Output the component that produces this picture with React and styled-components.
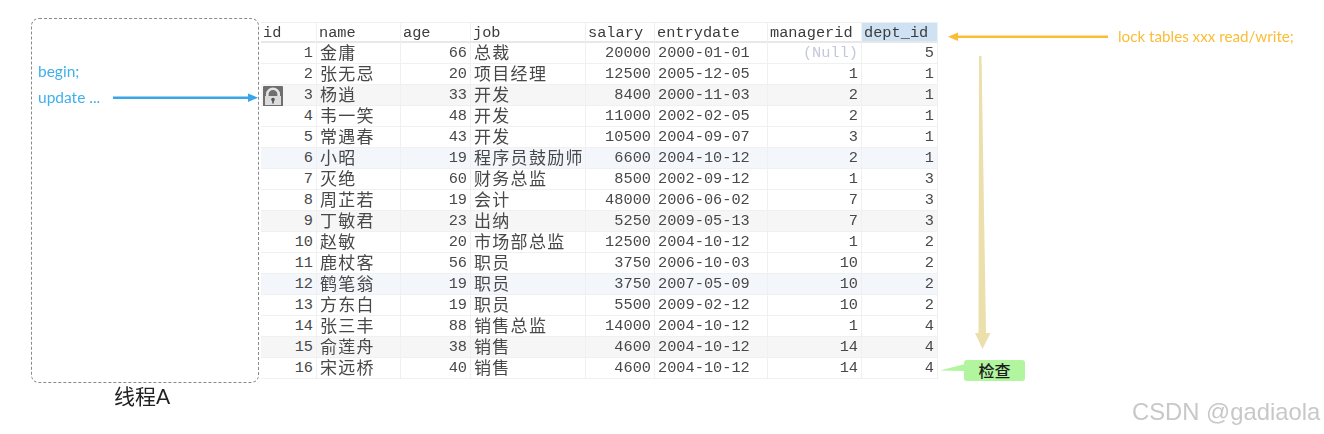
import React from 'react'
import styled, { createGlobalStyle } from 'styled-components'

const GlobalStyle = createGlobalStyle`
  html, body { margin: 0; padding: 0; background: #fff; }
  body { width: 1324px; height: 434px; overflow: hidden; font-family: Lato, "Noto Sans CJK SC", sans-serif; }
`

const columns = [
  { key: 'id', width: 56, align: 'right' },
  { key: 'name', width: 84, align: 'left' },
  { key: 'age', width: 70, align: 'right' },
  { key: 'job', width: 115, align: 'left' },
  { key: 'salary', width: 69, align: 'right' },
  { key: 'entrydate', width: 113, align: 'left' },
  { key: 'managerid', width: 94, align: 'right' },
  { key: 'dept_id', width: 76, align: 'right' },
]

const rows = [
  [1, '金庸', 66, '总裁', 20000, '2000-01-01', null, 5],
  [2, '张无忌', 20, '项目经理', 12500, '2005-12-05', 1, 1],
  [3, '杨逍', 33, '开发', 8400, '2000-11-03', 2, 1],
  [4, '韦一笑', 48, '开发', 11000, '2002-02-05', 2, 1],
  [5, '常遇春', 43, '开发', 10500, '2004-09-07', 3, 1],
  [6, '小昭', 19, '程序员鼓励师', 6600, '2004-10-12', 2, 1],
  [7, '灭绝', 60, '财务总监', 8500, '2002-09-12', 1, 3],
  [8, '周芷若', 19, '会计', 48000, '2006-06-02', 7, 3],
  [9, '丁敏君', 23, '出纳', 5250, '2009-05-13', 7, 3],
  [10, '赵敏', 20, '市场部总监', 12500, '2004-10-12', 1, 2],
  [11, '鹿杖客', 56, '职员', 3750, '2006-10-03', 10, 2],
  [12, '鹤笔翁', 19, '职员', 3750, '2007-05-09', 10, 2],
  [13, '方东白', 19, '职员', 5500, '2009-02-12', 10, 2],
  [14, '张三丰', 88, '销售总监', 14000, '2004-10-12', 1, 4],
  [15, '俞莲舟', 38, '销售', 4600, '2004-10-12', 14, 4],
  [16, '宋远桥', 40, '销售', 4600, '2004-10-12', 14, 4],
]

const tints = { 3: '#f6f6f6', 6: '#f3f7fc', 9: '#f6f6f6', 12: '#f3f7fc', 15: '#f6f6f6' }

const Page = styled.div`
  position: relative;
  width: 1324px;
  height: 434px;
  display: flex;
  align-items: flex-start;
  padding: 18px 0 0 31px;
  box-sizing: border-box;
  filter: blur(0.35px);
`

const ThreadColumn = styled.div`
  width: 228px;
  flex: none;
  display: flex;
  flex-direction: column;
  align-items: center;
`

const ThreadBox = styled.div`
  width: 228px;
  height: 365px;
  box-sizing: border-box;
  border: 1px dashed #8a8a8a;
  border-radius: 8px;
  padding: 43px 0 0 6px;
  display: flex;
  flex-direction: column;
  gap: 8px;
`

const BlueLabel = styled.div`
  font-size: 15.5px;
  line-height: 18px;
  color: #3fb0ec;
`

const ThreadCaption = styled.div`
  margin: -1px 6px 0 0;
  font-size: 21px;
  line-height: 28px;
  color: #222;
`

const Table = styled.div`
  margin: 4px 0 0 2px;
  flex: none;
  display: grid;
  grid-template-columns: ${columns.map(c => `${c.width}px`).join(' ')};
  grid-auto-rows: 21px;
  font-family: "Liberation Mono", "Noto Sans CJK SC", monospace;
  font-size: 15.3px;
  color: #484848;
`

const Cell = styled.div`
  position: relative;
  box-sizing: border-box;
  height: 21px;
  line-height: 20px;
  padding: 0 3px;
  white-space: nowrap;
  text-align: ${p => p.$align};
  background: ${p => p.$bg || '#fff'};
  border-right: 1px solid #f0f0f0;
  border-bottom: 1px solid #f0f0f0;
`

const HeadCell = styled(Cell)`
  padding: 0 2px;
  line-height: 22px;
  color: #3c3c3c;
  border-bottom: 2px solid #e8e8e8;
  box-shadow: inset 0 1px 0 #efefef;
  background: ${p => (p.$active ? '#cfe2f3' : '#fff')};
`

const CjkText = styled.span`
  display: inline-block;
  height: 17px;
  line-height: 17px;
  vertical-align: top;
  font-family: "Noto Sans CJK SC", sans-serif;
  font-size: 17px;
  letter-spacing: 1.3px;
`

const NullText = styled.span`
  color: #c3c9dc;
`

const LockBadge = styled.svg`
  position: absolute;
  left: 2px;
  top: 1px;
`

const Overlay = styled.svg`
  position: absolute;
  left: 0;
  top: 0;
  pointer-events: none;
`

const LockNote = styled.div`
  position: absolute;
  left: 1118px;
  top: 26px;
  font-size: 15.2px;
  line-height: 20px;
  color: #fbbd36;
`

const CheckTag = styled.div`
  position: absolute;
  left: 964px;
  top: 360px;
  width: 61px;
  height: 21px;
  border-radius: 3px;
  background: #b2f59f;
  color: #1c1c1c;
  font-size: 16px;
  font-weight: 500;
  line-height: 21px;
  text-align: center;
`

const Watermark = styled.div`
  position: absolute;
  left: 1132px;
  top: 399px;
  font-family: "Liberation Sans", sans-serif;
  font-size: 23.8px;
  line-height: 26px;
  color: #c8c8c8;
`

const Lock = () => (
  <LockBadge width="20" height="21" viewBox="0 0 20 21">
    <rect width="20" height="21" rx="1" fill="#6f6f6f" />
    <path d="M3 11V8a7 6.500 0 0 1 14 0v3h-2.600V8a4.400 4 0 0 0-8.800 0v3z" fill="#e4e4e4" />
    <rect x="2" y="10" width="16" height="9" fill="#dcdcdc" />
    <circle cx="10" cy="13.600" r="1.800" fill="#555" />
    <rect x="9.200" y="14" width="1.600" height="3.500" fill="#555" />
  </LockBadge>
)

const formatCell = (value, key) => {
  if (value === null) return <NullText>(Null)</NullText>
  if (key === 'name' || key === 'job') return <CjkText>{value}</CjkText>
  return value
}

export default function App() {
  return (
    <Page>
      <GlobalStyle />
      <ThreadColumn>
        <ThreadBox>
          <BlueLabel>begin;</BlueLabel>
          <BlueLabel>update ...</BlueLabel>
        </ThreadBox>
        <ThreadCaption>线程A</ThreadCaption>
      </ThreadColumn>

      <Table>
        {columns.map(c => (
          <HeadCell key={c.key} $align="left" $active={c.key === 'dept_id'}>{c.key}</HeadCell>
        ))}
        {rows.map(row => row.map((value, i) => (
          <Cell key={`${row[0]}-${i}`} $align={columns[i].align} $bg={tints[row[0]]}>
            {i === 0 && row[0] === 3 && <Lock />}
            {formatCell(value, columns[i].key)}
          </Cell>
        )))}
      </Table>

      <LockNote>lock tables xxx read/write;</LockNote>
      <CheckTag>检查</CheckTag>
      <Watermark>CSDN @gadiaola</Watermark>

      {/* arrows sit on top of the table */}
      <Overlay width="1324" height="434" viewBox="0 0 1324 434">
        <path d="M113 97.700H248" stroke="#38a6ea" strokeWidth="2.500" />
        <path d="M248 93.500L258 97.700L248 102z" fill="#38a6ea" />
        <path d="M1108 36.700H958" stroke="#fbbd36" strokeWidth="2.500" />
        <path d="M958 32.500L948 36.700L958 41z" fill="#fbbd36" />
        <path d="M979 56H981.500L986 333H990.500L982.500 349L975 333H978.500z" fill="#ebdfab" />
        <path d="M940 370.500L965 364V371z" fill="#b2f59f" />
      </Overlay>
    </Page>
  )
}
